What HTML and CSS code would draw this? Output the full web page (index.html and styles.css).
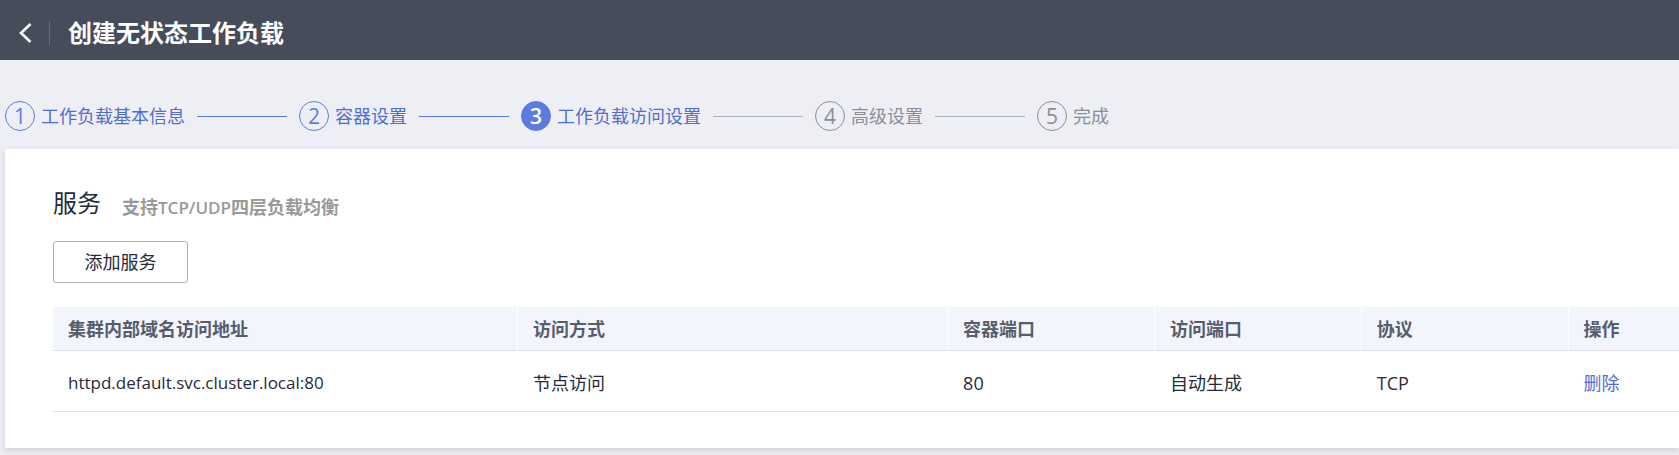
FILE: index.html
```html
<!DOCTYPE html>
<html lang="zh-CN">
<head>
<meta charset="utf-8">
<meta name="viewport" content="width=device-width, initial-scale=1">
<title>创建无状态工作负载</title>
<link rel="stylesheet" href="styles.css">
</head>
<body>
<header class="topbar">
  <button class="back" type="button" aria-label="返回">
    <svg width="14" height="20" viewBox="0 0 14 20" fill="none" stroke="currentColor" stroke-width="2.6" aria-hidden="true"><path d="M12.500 1 3 10l9.500 9"/></svg>
  </button>
  <h1 class="title">创建无状态工作负载</h1>
</header>
<main>
  <ol class="steps">
    <li class="step done"><span class="num">1</span><span>工作负载基本信息</span></li>
    <li class="step done"><span class="num">2</span><span>容器设置</span></li>
    <li class="step current" aria-current="step"><span class="num">3</span><span>工作负载访问设置</span></li>
    <li class="step"><span class="num">4</span><span>高级设置</span></li>
    <li class="step"><span class="num">5</span><span>完成</span></li>
  </ol>
  <section class="panel">
    <div class="heading">
      <h2 class="name">服务</h2>
      <span class="hint">支持<span class="latin">TCP/UDP</span>四层负载均衡</span>
    </div>
    <button class="add" type="button">添加服务</button>
    <table class="services">
      <colgroup>
        <col class="c-address"><col class="c-mode"><col class="c-port"><col class="c-port"><col class="c-port"><col>
      </colgroup>
      <thead>
        <tr><th scope="col">集群内部域名访问地址</th><th scope="col">访问方式</th><th scope="col">容器端口</th><th scope="col">访问端口</th><th scope="col">协议</th><th scope="col">操作</th></tr>
      </thead>
      <tbody>
        <tr><td class="address">httpd.default.svc.cluster.local:80</td><td>节点访问</td><td>80</td><td>自动生成</td><td>TCP</td><td><a class="link" href="#">删除</a></td></tr>
      </tbody>
    </table>
  </section>
</main>
</body>
</html>
```
FILE: styles.css
```css
* {
  box-sizing: border-box;
}

body {
  margin: 0;
  min-height: 100vh;
  background: #eeeff5;
  color: #252b3a;
  font: 18px/24px "Open Sans", "Noto Sans CJK SC", sans-serif;
}

h1,
h2 {
  margin: 0;
}

button {
  font: inherit;
  color: inherit;
  cursor: pointer;
}

.topbar {
  display: flex;
  align-items: center;
  height: 60px;
  padding-top: 5px;
  background: #464c59;
  color: #fff;
}

.back {
  display: flex;
  align-items: center;
  justify-content: flex-end;
  width: 50px;
  height: 24px;
  padding: 0 17px 0 0;
  border: 0;
  border-right: 1px solid #6b6d7c;
  background: none;
}

.title {
  margin-left: 18px;
  font-size: 24px;
  line-height: 32px;
  font-weight: 700;
}

.steps {
  display: flex;
  margin: 0;
  padding: 41px 5px 18px;
  list-style: none;
  color: #8a8e99;
}

.step {
  display: flex;
  align-items: center;
  gap: 6px;
  white-space: nowrap;
}

.step:not(:last-child)::after {
  content: "";
  width: 90px;
  height: 1px;
  margin: 0 12px 0 6px;
  background: #adb0b8;
}

.num {
  display: flex;
  align-items: center;
  justify-content: center;
  width: 30px;
  height: 30px;
  border: 1px solid currentColor;
  border-radius: 50%;
  font-size: 21px;
}

.done,
.current {
  color: #526ecc;
}

.done .num {
  color: #5e7ce0;
}

.step.done::after {
  background: #5e7ce0;
}

.current .num {
  border-color: #5e7ce0;
  background: #5e7ce0;
  color: #fff;
  font-weight: 600;
}

.panel {
  margin-left: 5px;
  padding: 36px 0 36px 48px;
  background: #fff;
  box-shadow: 0 2px 6px rgba(37, 43, 58, 0.16);
}

.heading {
  display: flex;
  align-items: center;
  gap: 21px;
}

.name {
  font-size: 24px;
  line-height: 36px;
  font-weight: 400;
}

.hint {
  padding-top: 8px;
  color: #999;
  font-weight: 700;
}

.latin {
  font-size: 17px;
  font-weight: 600;
}

.add {
  display: block;
  width: 135px;
  height: 42px;
  margin: 20px 0 24px;
  padding: 0;
  border: 1px solid #adb0b8;
  border-radius: 3px;
  background: #fff;
}

.services {
  width: 100%;
  border-collapse: separate;
  border-spacing: 0;
  table-layout: fixed;
}

.c-address {
  width: 28.6%;
}

.c-mode {
  width: 26.45%;
}

.c-port {
  width: 12.72%;
}

.services th,
.services td {
  padding: 0 15px;
  border-bottom: 1px solid #dfe1e6;
  text-align: left;
  white-space: nowrap;
}

.services th {
  height: 44px;
  background: #f2f5fc;
  color: #575d6c;
  font-weight: 700;
}

.services th:not(:last-child) {
  border-right: 1px solid #fff;
}

.services td {
  height: 61px;
  padding-top: 3px;
}

.services .address {
  font-size: 17px;
}

.link {
  color: #526ecc;
  text-decoration: none;
}
```
